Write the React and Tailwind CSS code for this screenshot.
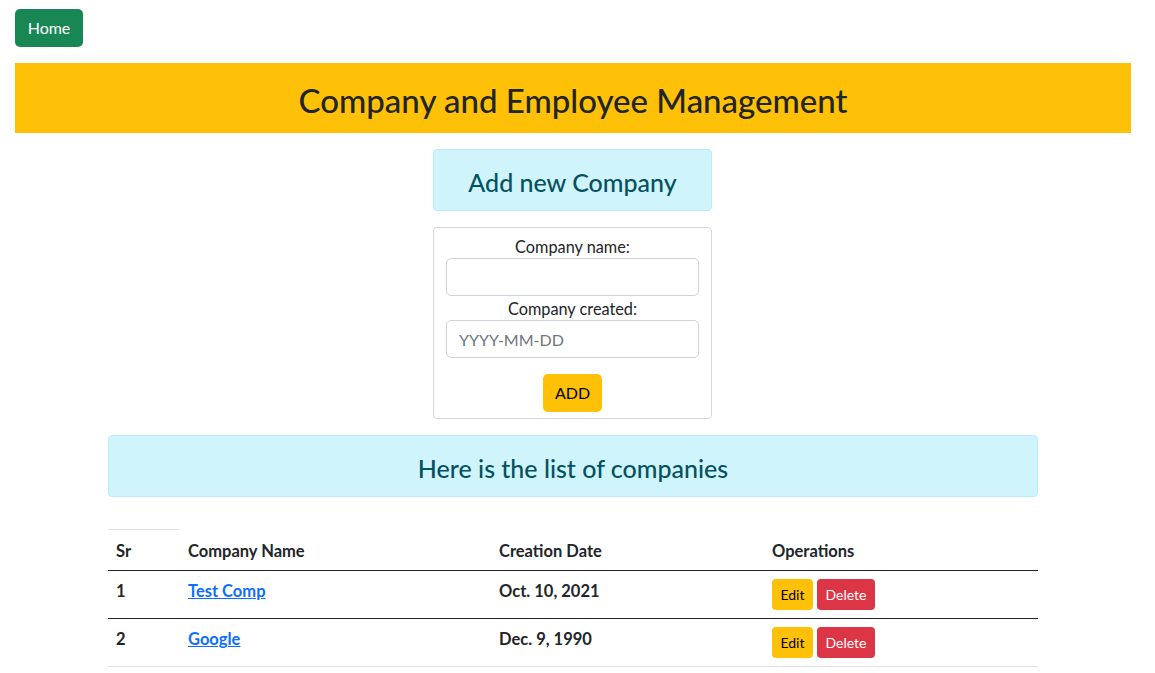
export default function App() {
  const rows = [
    { sr: 1, name: "Test Comp", date: "Oct. 10, 2021" },
    { sr: 2, name: "Google", date: "Dec. 9, 1990" },
  ];
  return (
    <div className="min-h-screen bg-white text-[#212529] text-[16px] leading-[24px]" style={{ fontFamily: '"Lato", "Noto Sans", sans-serif' }}>
      <div className="pl-[15px] pt-[9px] w-[1131px]">
        <button className="h-[38px] w-[68px] bg-[#198754] text-white rounded-[5px] text-[16px] leading-[24px]">Home</button>
        <div className="mt-[16px] h-[70px] w-[1116px] bg-[#ffc107] flex items-center justify-center pt-[3px]">
          <h2 className="text-[33px] leading-[38px] font-medium text-[#212529]">Company and Employee Management</h2>
        </div>
        <div className="ml-[418px] mt-[16px] w-[279px] h-[62px] bg-[#cff4fc] border border-[#b6effb] rounded-[4px] flex items-center justify-center pt-[3px] text-[#055160] text-[25px] font-medium">
          Add new Company
        </div>
        <div className="ml-[418px] mt-[16px] w-[279px] h-[192px] border border-[#d3d6da] rounded-[4px] flex flex-col items-center pt-[7px] px-[12px]">
          <label className="leading-[24px] text-[16.3px]">Company name:</label>
          <input className="mt-[-1px] w-[253px] h-[38px] border border-[#ced4da] rounded-[5px] px-[12px] outline-none" />
          <label className="mt-[1px] leading-[24px] text-[16.3px]">Company created:</label>
          <input placeholder="YYYY-MM-DD" className="mt-[-1px] w-[253px] h-[38px] border border-[#ced4da] rounded-[5px] px-[12px] outline-none placeholder:text-[#6c757d]" />
          <button className="mt-[16px] w-[59px] h-[38px] bg-[#ffc107] rounded-[5px] text-[#000]">ADD</button>
        </div>
        <div className="ml-[93px] mt-[16px] w-[930px] h-[62px] bg-[#cff4fc] border border-[#b6effb] rounded-[4px] flex items-center justify-center pt-[3px] text-[#055160] text-[25px] font-medium">
          Here is the list of companies
        </div>
        <div className="ml-[93px] mt-[32px] w-[930px]">
          <div className="w-[71px] border-t border-[#dee2e6]"></div>
          <div className="flex h-[41px] border-b border-[#212529] font-bold text-[16.5px]">
            <div className="w-[72px] px-[8px] pt-[9px]">Sr</div>
            <div className="w-[311px] px-[8px] pt-[9px]">Company Name</div>
            <div className="w-[273px] px-[8px] pt-[9px]">Creation Date</div>
            <div className="w-[274px] px-[8px] pt-[9px]">Operations</div>
          </div>
          {rows.map((r, i) => (
            <div key={r.sr} className={`flex h-[48px] border-b font-bold text-[16.5px] ${i === rows.length - 1 ? "border-[#dee2e6]" : "border-[#212529]"}`}>
              <div className="w-[72px] px-[8px] pt-[8px]">{r.sr}</div>
              <div className="w-[311px] px-[8px] pt-[8px]">
                <a href="#" className="text-[#0d6efd] underline">{r.name}</a>
              </div>
              <div className="w-[273px] px-[8px] pt-[8px]">{r.date}</div>
              <div className="w-[274px] px-[8px] pt-[8px] flex items-start gap-[4px]">
                <button className="h-[31px] w-[41px] bg-[#ffc107] rounded-[4px] text-[14px] font-normal text-black">Edit</button>
                <button className="h-[31px] w-[58px] bg-[#dc3545] rounded-[4px] text-[14px] font-normal text-white">Delete</button>
              </div>
            </div>
          ))}
        </div>
      </div>
    </div>
  );
}
